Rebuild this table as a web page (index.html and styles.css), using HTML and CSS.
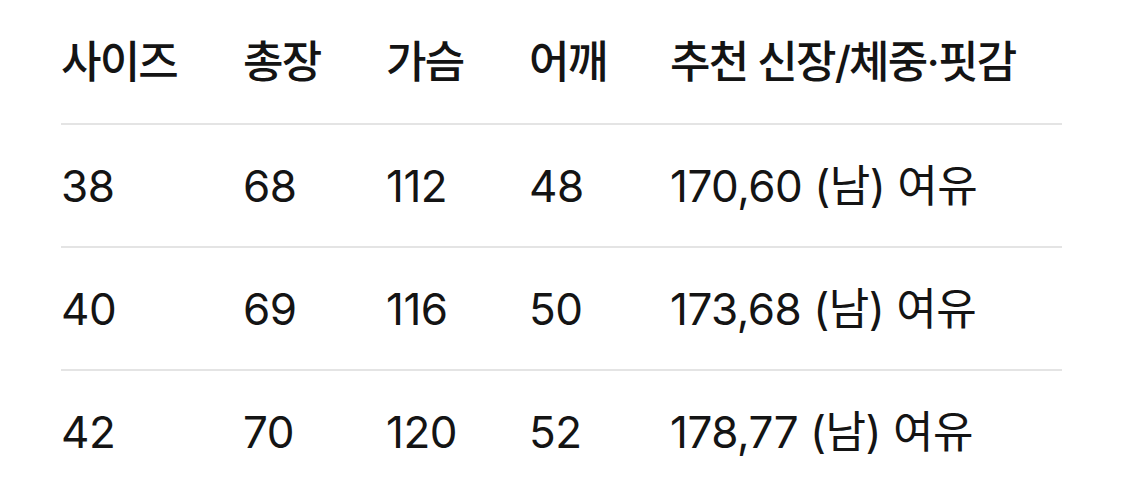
FILE: index.html
```html
<!DOCTYPE html>
<html lang="ko">
<head>
<meta charset="utf-8">
<link rel="stylesheet" href="styles.css">
</head>
<body>
<div class="size-table">
  <div class="row head">
    <div class="cell">사이즈</div>
    <div class="cell">총장</div>
    <div class="cell">가슴</div>
    <div class="cell">어깨</div>
    <div class="cell">추천 신장/체중·핏감</div>
  </div>
  <div class="row">
    <div class="cell">38</div>
    <div class="cell">68</div>
    <div class="cell">112</div>
    <div class="cell">48</div>
    <div class="cell">170,60 (남) 여유</div>
  </div>
  <div class="row">
    <div class="cell">40</div>
    <div class="cell">69</div>
    <div class="cell">116</div>
    <div class="cell">50</div>
    <div class="cell">173,68 (남) 여유</div>
  </div>
  <div class="row">
    <div class="cell">42</div>
    <div class="cell">70</div>
    <div class="cell">120</div>
    <div class="cell">52</div>
    <div class="cell">178,77 (남) 여유</div>
  </div>
</div>
</body>
</html>
```

FILE: styles.css
```css
html, body {
  margin: 0;
  padding: 0;
  background: #ffffff;
}

body {
  font-family: "Inter", "Noto Sans CJK KR", sans-serif;
  color: #141414;
  font-size: 44px;
  overflow: hidden;
}

.size-table {
  margin-left: 61px;
  width: 1001px;
}

.row {
  display: grid;
  grid-template-columns: 182px 143px 143px 141px 1fr;
  height: 121px;
  align-items: center;
  border-bottom: 2px solid #e4e4e4;
}

.row.head {
  height: 123px;
}

.cell {
  white-space: nowrap;
  line-height: 1;
  letter-spacing: -0.5px;
}

.head .cell {
  font-weight: 500;
  letter-spacing: -1.8px;
}
```
